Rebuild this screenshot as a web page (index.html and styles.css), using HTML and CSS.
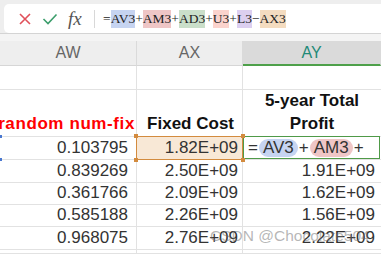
FILE: index.html
```html
<!DOCTYPE html>
<html lang="en">
<head>
    <meta charset="UTF-8">
    <title>Sheet</title>
    <link rel="stylesheet" href="styles.css">
</head>
<body>
    <div class="topbar">
        <div class="fbox">
            <svg class="ico" width="14" height="14" viewBox="0 0 14 14">
                <path d="M2 2 L12 12 M12 2 L2 12" stroke="#e0505a" stroke-width="1.6" fill="none"/>
            </svg>
            <svg class="ico" width="16" height="14" viewBox="0 0 16 14">
                <path d="M1.5 7 L6 11.5 L14.5 2.5" stroke="#3c9e6c" stroke-width="1.6" fill="none"/>
            </svg>
            <span class="fx">fx</span>
            <span class="sep"></span>
            <div class="formula">=<span class="ref blue">AV3</span>+<span class="ref pink">AM3</span>+<span class="ref green">AD3</span>+<span class="ref salmon">U3</span>+<span class="ref violet">L3</span>&minus;<span class="ref peach">AX3</span></div>
        </div>
    </div>
    <div class="band"></div>

    <div class="sheet">
        <div class="ch">AW</div>
        <div class="ch">AX</div>
        <div class="ch sel">AY</div>

        <div class="c"></div>
        <div class="c"></div>
        <div class="c"></div>

        <div class="c hd red"><span>random num-fix</span></div>
        <div class="c hd">Fixed Cost</div>
        <div class="c hd center">5-year Total<br>Profit</div>

        <div class="c num mark">0.103795</div>
        <div class="c num active">1.82E+09
            <i class="hd-h tl"></i><i class="hd-h tr"></i><i class="hd-h bl"></i><i class="hd-h br"></i>
        </div>
        <div class="c edit">= <span class="pill blue">AV3</span> + <span class="pill pink">AM3</span> +</div>

        <div class="c num">0.839269</div>
        <div class="c num">2.50E+09</div>
        <div class="c num">1.91E+09</div>

        <div class="c num">0.361766</div>
        <div class="c num">2.09E+09</div>
        <div class="c num">1.62E+09</div>

        <div class="c num">0.585188</div>
        <div class="c num">2.26E+09</div>
        <div class="c num">1.56E+09</div>

        <div class="c num">0.968075</div>
        <div class="c num">2.76E+09</div>
        <div class="c num">2.22E+09</div>

        <div class="c"></div>
        <div class="c"></div>
        <div class="c"></div>

        <div class="watermark">CSDN @Chocolate504</div>
    </div>
</body>
</html>
```

FILE: styles.css
```css
body {
    margin: 0;
    width: 381px;
    height: 255px;
    overflow: hidden;
    background-color: #fff;
    font-family: "Liberation Sans", Arial, sans-serif;
}
.topbar {
    height: 34px;
    background-color: #eeeeee;
    border-bottom: 1px solid #d4d4d4;
    padding: 4px 0 0 4px;
    box-sizing: border-box;
}
.fbox {
    height: 29px;
    background-color: #fff;
    border-radius: 5px 0 0 5px;
    display: flex;
    align-items: center;
    padding-left: 14px;
}
.ico {
    margin-right: 10px;
}
.fx {
    font-family: "Liberation Serif", serif;
    font-style: italic;
    font-size: 19px;
    color: #555;
    width: 26px;
}
.sep {
    width: 1px;
    height: 18px;
    background-color: #d8d8d8;
    margin-right: 8px;
}
.formula {
    font-family: "Liberation Serif", serif;
    font-size: 13.5px;
    color: #222;
    line-height: 18px;
}
.ref {
    display: inline-block;
    padding: 0;
}
.blue { background-color: #c6d4f1; }
.pink { background-color: #efc6c6; }
.green { background-color: #cadfca; }
.salmon { background-color: #fbd3cd; }
.violet { background-color: #dccff0; }
.peach { background-color: #f4dcc0; }

.band {
    height: 7px;
    background-color: #f4f4f4;
}
.sheet {
    position: relative;
    display: grid;
    grid-template-columns: 137px 106px 138px;
    grid-template-rows: 25px 24px 47px 23px 23px 22px 22px 23px 4px;
}
.ch {
    background-color: #eeeeee;
    border-right: 1px solid #dadada;
    border-bottom: 1px solid #d6d6d6;
    color: #666;
    font-size: 16px;
    display: flex;
    align-items: center;
    justify-content: center;
}
.ch.sel {
    background-color: #dadada;
    color: #1f8a78;
    border-bottom: 2px solid #4ea04a;
}
.c {
    border-right: 1px solid #e2e2e2;
    border-bottom: 1px solid #e2e2e2;
    font-size: 17px;
    color: #333;
    display: flex;
    align-items: flex-end;
    padding: 0 8px 1px 4px;
    line-height: 20px;
    white-space: nowrap;
    position: relative;
}
.c:nth-child(3n) {
    border-right: none;
}
.hd {
    font-weight: bold;
    color: #111;
    justify-content: flex-end;
    padding-bottom: 1px;
    line-height: 23px;
}
.hd.red {
    color: #f00;
    letter-spacing: 0.6px;
    padding-right: 1px;
}
.hd.center {
    justify-content: center;
    text-align: center;
    padding-right: 4px;
}
.num {
    justify-content: flex-end;
}
.c:nth-child(3n+2).num {
    padding-right: 4px;
}
.c:nth-child(3n).num {
    padding-right: 6px;
}
.active {
    background-color: #f8e8d6;
}
.active::after {
    content: "";
    position: absolute;
    inset: -1px;
    border: 1.5px solid #d38b3e;
}
.hd-h {
    position: absolute;
    width: 4px;
    height: 4px;
    background-color: #d38b3e;
    z-index: 2;
}
.tl { left: -3px; top: -3px; }
.tr { right: -3px; top: -3px; }
.bl { left: -3px; bottom: -3px; }
.br { right: -3px; bottom: -3px; }

.mark::before,
.mark::after {
    content: "";
    position: absolute;
    left: 0;
    width: 2px;
    height: 3px;
    background-color: #4a78d0;
}
.mark::before { top: -2px; }
.mark::after { bottom: -2px; }

.edit {
    color: #333;
    padding-left: 5px;
    align-items: center;
    padding-bottom: 0;
}
.edit::after {
    content: "";
    position: absolute;
    inset: -1px 1px 0 0;
    border: 1.5px solid #4f9a48;
}
.pill {
    display: inline-block;
    padding: 0 4px;
    border-radius: 9px;
    line-height: 18px;
    margin: 0 1px;
}
.watermark {
    position: absolute;
    left: 210px;
    top: 186px;
    font-size: 15.5px;
    color: rgba(110, 110, 110, 0.5);
    white-space: nowrap;
}
```
